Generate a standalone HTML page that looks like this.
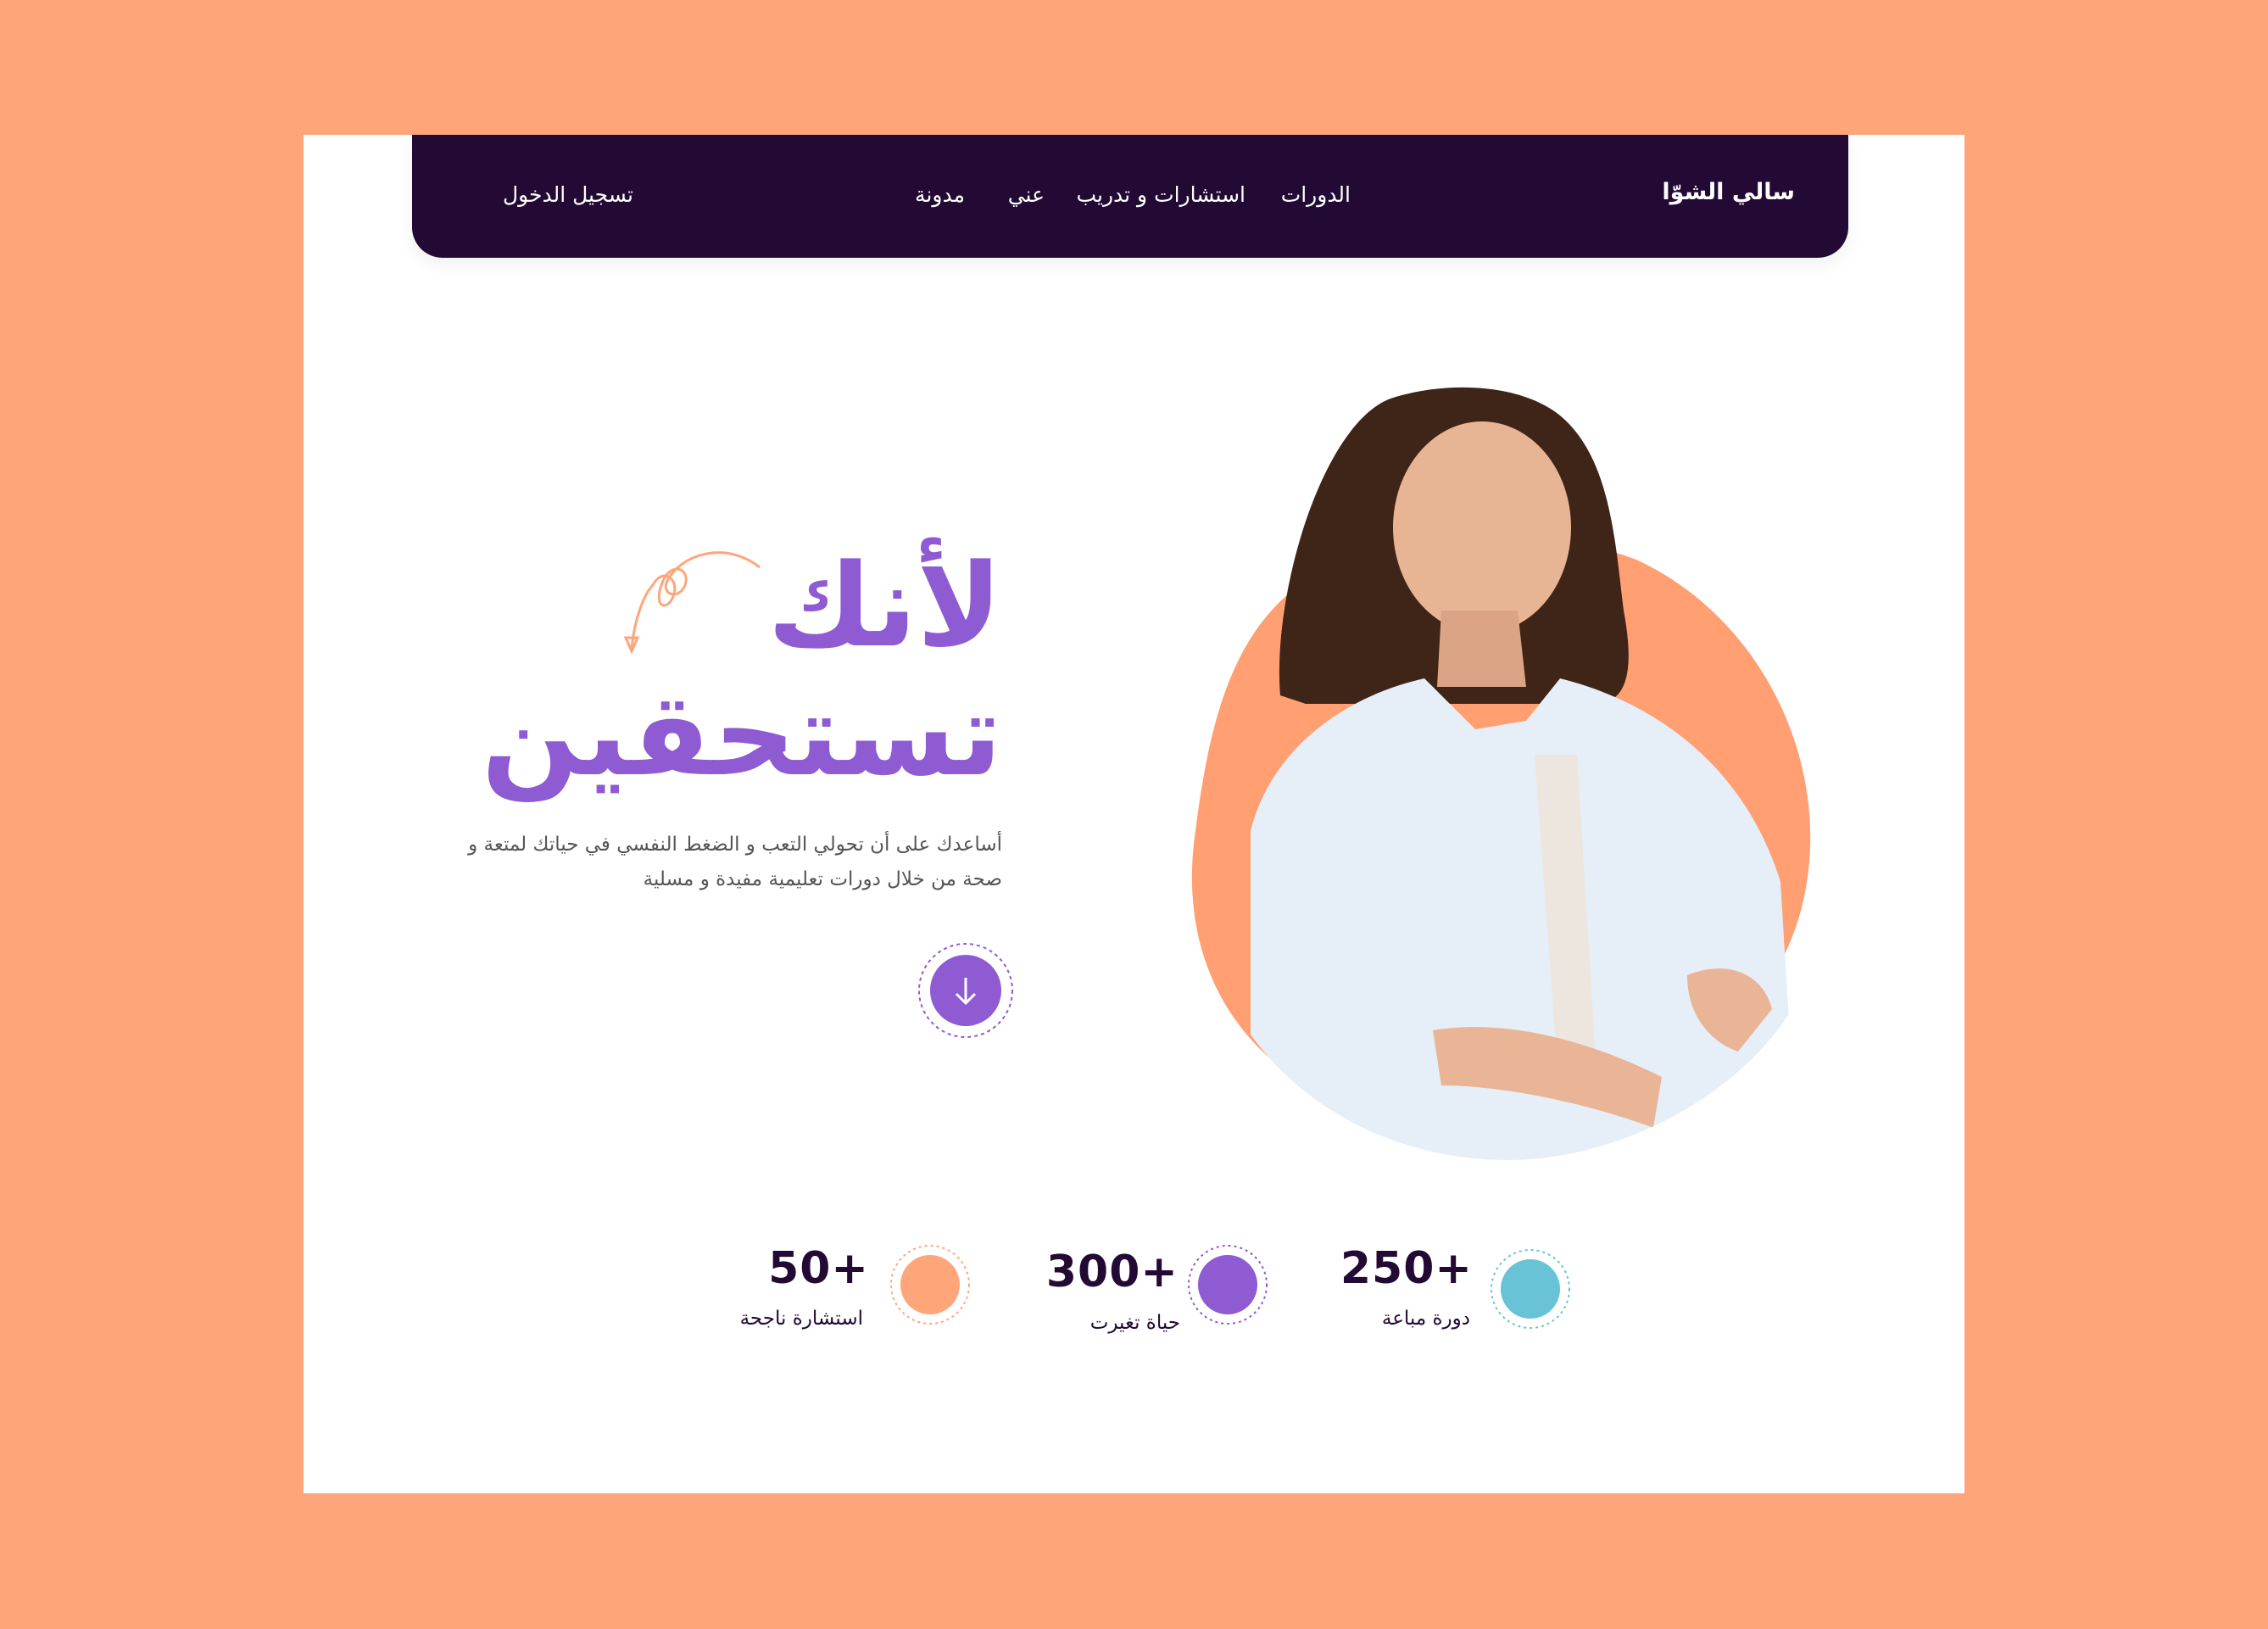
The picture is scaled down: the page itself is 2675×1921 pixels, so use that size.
<!DOCTYPE html>
<html lang="ar">
<head>
<meta charset="utf-8">
<style>
html,body{margin:0;padding:0}
body{width:2675px;height:1921px;background:#ffa57a;position:relative;overflow:hidden;font-family:"DejaVu Sans","Liberation Sans",sans-serif}
.card{position:absolute;left:358px;top:159px;width:1959px;height:1602px;background:#fff}
.nav{position:absolute;left:486px;top:159px;width:1694px;height:145px;background:#230a35;border-radius:0 0 36px 36px;box-shadow:0 8px 20px rgba(0,0,0,.06)}
.t{position:absolute;white-space:nowrap;direction:rtl}
.nl{color:#fff;font-size:25px;top:215px}
.h{color:#8e5bd3;font-weight:bold;right:0}
.p{color:#555;font-size:23px}
.num{color:#230a35;font-weight:900;font-size:52px;font-family:"DejaVu Sans",sans-serif;direction:ltr;letter-spacing:1px}
.lab{color:#230a35;font-size:23px}
</style>
</head>
<body>
<div class="card"></div>
<div class="nav"></div>
<div class="t" style="color:#fff;font-weight:bold;font-size:27px;top:211px;right:558px">سالي الشوّا</div>
<div class="t nl" style="right:1082px">الدورات</div>
<div class="t nl" style="right:1206px">استشارات و تدريب</div>
<div class="t nl" style="right:1443px">عني</div>
<div class="t nl" style="right:1537px">مدونة</div>
<div class="t nl" style="right:1928px">تسجيل الدخول</div>

<div class="t h" style="right:1493px;top:635px;font-size:135px;line-height:160px">لأنك</div>
<div class="t h" style="right:1493px;top:782px;font-size:135px;line-height:170px">تستحقين</div>
<div class="t p" style="right:1493px;top:983px">أساعدك على أن تحولي التعب و الضغط النفسي في حياتك لمتعة و</div>
<div class="t p" style="right:1493px;top:1024px">صحة من خلال دورات تعليمية مفيدة و مسلية</div>

<svg width="2675" height="1921" style="position:absolute;left:0;top:0" xmlns="http://www.w3.org/2000/svg">
 <path d="M896 669 C860 640 810 650 790 680 C775 700 800 710 808 690 C815 670 790 660 780 690 C770 720 790 720 795 700 C800 680 780 670 770 690 C760 700 748 730 745 765" fill="none" stroke="#ffa57a" stroke-width="3"/>
 <path d="M738 752 L745 768 L752 752 Z" fill="none" stroke="#ffa57a" stroke-width="3"/>
 <circle cx="1139" cy="1168" r="55" fill="none" stroke="#8e5bd3" stroke-width="2" stroke-dasharray="4 4"/>
 <circle cx="1139" cy="1168" r="42" fill="#8e5bd3"/>
 <path d="M1139 1153 V1183 M1128 1172 L1139 1183 L1150 1172" fill="none" stroke="#fff" stroke-width="3"/>
 <path d="M1520 700 C1640 640 1800 610 1930 660 C2060 720 2140 860 2135 1000 C2130 1120 2070 1200 1990 1250 L1500 1250 C1420 1180 1395 1080 1410 980 C1425 860 1450 760 1520 700 Z" fill="#ff9f72"/>
 <defs><clipPath id="c"><path d="M1430 400 L2120 400 L2120 1180 C2050 1300 1900 1368 1780 1368 C1650 1368 1540 1310 1475 1220 Z"/></clipPath></defs>
 <g clip-path="url(#c)">
  <path d="M1510 820 C1500 700 1560 500 1640 470 C1700 450 1790 450 1840 490 C1900 540 1905 640 1915 720 C1930 800 1915 830 1880 830 L1540 830 Z" fill="#3f2418"/>
  <ellipse cx="1748" cy="622" rx="105" ry="125" fill="#e7b594"/>
  <path d="M1700 720 L1790 720 L1800 810 L1695 810 Z" fill="#dba585"/>
  <path d="M1475 980 C1500 880 1590 820 1680 800 L1740 860 L1800 850 L1840 800 C1960 830 2060 910 2100 1040 L2120 1368 L1475 1368 Z" fill="#e6eef7"/>
  <path d="M1810 890 L1860 890 L1885 1300 L1840 1300 Z" fill="#ede6de"/>
  <path d="M1690 1215 C1780 1200 1880 1230 1960 1270 L1950 1330 C1870 1300 1770 1280 1700 1280 Z" fill="#e9b596"/>
  <path d="M1990 1150 C2040 1130 2080 1150 2090 1190 L2050 1240 C2020 1230 1990 1200 1990 1150 Z" fill="#e9b596"/>
 </g>
 <circle cx="1097" cy="1515" r="46" fill="none" stroke="#ffa57a" stroke-width="2" stroke-dasharray="3 4"/>
 <circle cx="1097" cy="1515" r="35" fill="#ffa57a"/>
 <circle cx="1448" cy="1515" r="46" fill="none" stroke="#8e5bd3" stroke-width="2" stroke-dasharray="3 4"/>
 <circle cx="1448" cy="1515" r="35" fill="#8e5bd3"/>
 <circle cx="1805" cy="1520" r="46" fill="none" stroke="#68c3d6" stroke-width="2" stroke-dasharray="3 4"/>
 <circle cx="1805" cy="1520" r="35" fill="#68c3d6"/>
</svg>

<div class="t num" style="right:1650px;top:1466px">50+</div>
<div class="t lab" style="right:1657px;top:1542px">استشارة ناجحة</div>
<div class="t num" style="right:1285px;top:1470px">300+</div>
<div class="t lab" style="right:1283px;top:1547px">حياة تغيرت</div>
<div class="t num" style="right:938px;top:1466px">250+</div>
<div class="t lab" style="right:941px;top:1542px">دورة مباعة</div>
</body>
</html>
